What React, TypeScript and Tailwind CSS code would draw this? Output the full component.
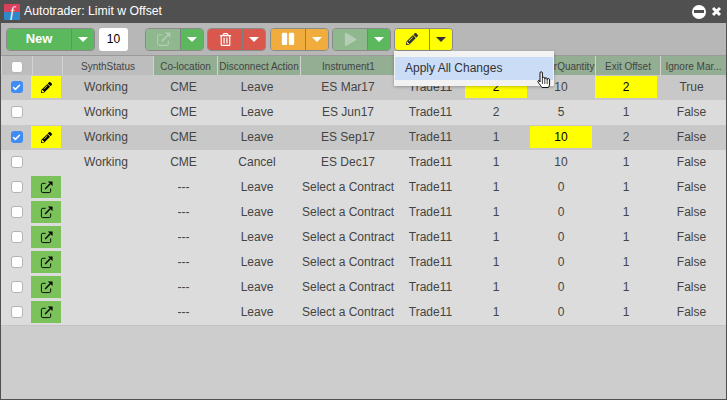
import { Check } from "lucide-react";
import { FaPause, FaPencilAlt, FaPlay, FaRegTrashAlt } from "react-icons/fa";

const widths = ["w-[31px]", "w-[30px]", "w-[91px]", "w-[64px]", "w-[83px]", "w-[96px]", "w-[69px]", "w-[65px]", "w-[65px]", "w-[65px]", "w-[66px]"];

const headers = [
  { label: "", green: false },
  { label: "", green: false },
  { label: "SynthStatus", green: false },
  { label: "Co-location", green: true },
  { label: "Disconnect Action", green: true },
  { label: "Instrument1", green: true },
  { label: "", green: true },
  { label: "", green: true },
  { label: "OrderQuantity", green: true },
  { label: "Exit Offset", green: true },
  { label: "Ignore Mar...", green: true },
];

type Row = {
  checked: boolean;
  icon: "edit" | "open" | null;
  status: string;
  colo: string;
  action: string;
  instrument: string;
  qty: number;
  order: number;
  offset: number;
  ignore: string;
  dark: boolean;
  yellow?: "qty" | "order";
  yellowOffset?: boolean;
};

const rows: Row[] = [
  { checked: true, icon: "edit", status: "Working", colo: "CME", action: "Leave", instrument: "ES Mar17", qty: 2, order: 10, offset: 2, ignore: "True", dark: true, yellow: "qty", yellowOffset: true },
  { checked: false, icon: null, status: "Working", colo: "CME", action: "Leave", instrument: "ES Jun17", qty: 2, order: 5, offset: 1, ignore: "False", dark: false },
  { checked: true, icon: "edit", status: "Working", colo: "CME", action: "Leave", instrument: "ES Sep17", qty: 1, order: 10, offset: 2, ignore: "False", dark: true, yellow: "order" },
  { checked: false, icon: null, status: "Working", colo: "CME", action: "Cancel", instrument: "ES Dec17", qty: 1, order: 10, offset: 1, ignore: "False", dark: false },
  ...Array.from({ length: 6 }, () => ({
    checked: false,
    icon: "open" as const,
    status: "",
    colo: "---",
    action: "Leave",
    instrument: "Select a Contract",
    qty: 1,
    order: 0,
    offset: 1,
    ignore: "False",
    dark: false,
  })),
];

function OpenIcon({ size = 14 }: { size?: number }) {
  return (
    <svg width={size} height={size} viewBox="0 0 14 14">
      <path d="M6 2.500H3A1.500 1.500 0 0 0 1.500 4v7A1.500 1.500 0 0 0 3 12.500h7a1.500 1.500 0 0 0 1.500-1.500V8" fill="none" stroke="currentColor" strokeWidth="1" />
      <path d="M5.500 8.500L11 3" fill="none" stroke="currentColor" strokeWidth="1.500" />
      <path d="M8.500 .5h5V5.500z" fill="currentColor" />
    </svg>
  );
}

function Caret({ color = "border-t-white" }: { color?: string }) {
  return <span className={`w-0 h-0 border-x-[5px] border-x-transparent border-t-[5px] ${color}`} />;
}

function SplitButton({
  main,
  mainClass,
  caretClass,
  widthClass,
  caretColor,
}: {
  main: React.ReactNode;
  mainClass: string;
  caretClass: string;
  widthClass: string;
  caretColor?: string;
}) {
  return (
    <div className="flex h-[23px] rounded-[4px] overflow-hidden border border-[#8a8a8a]">
      <div className={`${widthClass} flex items-center justify-center ${mainClass}`}>{main}</div>
      <div className={`w-[23px] flex items-center justify-center border-l border-[#808080] ${caretClass}`}>
        <Caret color={caretColor} />
      </div>
    </div>
  );
}

function Cell({ w, children, yellow, flush }: { w: string; children?: React.ReactNode; yellow?: boolean; flush?: boolean }) {
  return (
    <div className={`${w} h-full pb-[1px] flex items-center justify-center shrink-0 whitespace-nowrap ${flush ? "" : "pr-[3px]"}`}>
      {yellow ? (
        <div className="w-[62px] h-[22px] bg-[#ffff00] text-black flex items-center justify-center">{children}</div>
      ) : (
        children
      )}
    </div>
  );
}

function Box({ checked }: { checked: boolean }) {
  return checked ? (
    <span className="w-[12px] h-[12px] rounded-[3px] bg-[#3f8cf5] flex items-center justify-center">
      <Check size={9} strokeWidth={4} className="text-white" />
    </span>
  ) : (
    <span className="w-[12px] h-[12px] rounded-[3px] bg-white border border-[#b4b4b4]" />
  );
}

export default function App() {
  return (
    <div className="relative w-[727px] h-[400px] overflow-hidden flex flex-col bg-[#505050] font-['Liberation_Sans',Arial,sans-serif] text-[#444]">
      {/* title bar */}
      <div className="h-[23px] shrink-0 flex items-center px-[4px] text-white">
        <svg width="16" height="16" viewBox="0 0 16 16" className="shrink-0 rounded-[1px]">
          <rect width="16" height="8" fill="#d9425a" />
          <rect y="8" width="16" height="8" fill="#2e88c9" />
          <text x="8" y="13" textAnchor="middle" fill="#fff" fontSize="15" fontStyle="italic" fontFamily="Liberation Serif, serif">
            f
          </text>
        </svg>
        <span className="ml-[4px] text-[12.25px] leading-none">Autotrader: Limit w Offset</span>
        <div className="ml-auto flex items-center gap-[5px] pr-[1px]">
          <span className="w-[14px] h-[14px] rounded-full bg-white flex items-center justify-center">
            <span className="w-[10px] h-[3px] bg-[#505050]" />
          </span>
          <svg width="11" height="11" viewBox="0 0 11 11">
            <path d="M2 2l7 7M9 2l-7 7" stroke="#fff" strokeWidth="3" />
          </svg>
        </div>
      </div>

      <div className="flex-1 mx-px mb-px bg-[#cdcdcd] flex flex-col">
        {/* toolbar */}
        <div className="h-[33px] shrink-0 bg-[#b7b7b7] border-b border-[#9a9a9a] flex items-center pl-[5px]">
          <SplitButton
            widthClass="w-[64px]"
            mainClass="bg-[#5cb85c] text-white font-bold text-[13px]"
            caretClass="bg-[#5cb85c]"
            main="New"
          />
          <div className="ml-[4px] w-[29px] h-[23px] bg-white rounded-[3px] flex items-center justify-center text-[12px] text-black">10</div>
          <div className="ml-[17px]">
            <SplitButton
              widthClass="w-[34px]"
              mainClass="bg-[#8fb88f] text-[#b5cdb5]"
              caretClass="bg-[#5cb85c]"
              main={<OpenIcon size={15} />}
            />
          </div>
          <div className="ml-[3px]">
            <SplitButton
              widthClass="w-[34px]"
              mainClass="bg-[#d9574c] text-white"
              caretClass="bg-[#d9574c]"
              main={<FaRegTrashAlt size={13} />}
            />
          </div>
          <div className="ml-[4px]">
            <SplitButton
              widthClass="w-[34px]"
              mainClass="bg-[#f0ad3e] text-white"
              caretClass="bg-[#f0ad3e]"
              main={<FaPause size={14} />}
            />
          </div>
          <div className="ml-[3px]">
            <SplitButton
              widthClass="w-[34px]"
              mainClass="bg-[#8fb88f] text-[#b5cdb5]"
              caretClass="bg-[#5cb85c]"
              main={<FaPlay size={13} />}
            />
          </div>
          <div className="ml-[3px]">
            <SplitButton
              widthClass="w-[34px]"
              mainClass="bg-[#ffff00] text-[#333]"
              caretClass="bg-[#ffff00]"
              caretColor="border-t-[#333]"
              main={<FaPencilAlt size={12} />}
            />
          </div>
        </div>

        {/* header */}
        <div className="h-[19px] shrink-0 flex bg-[#bdbdbd] text-[10px] text-[#444]">
          {headers.map((h, i) => (
            <div
              key={i}
              className={`${widths[i]} shrink-0 pt-[2px] flex items-center justify-center whitespace-nowrap overflow-hidden border-l border-[#d2d2d2] ${h.green ? "bg-[#93ae93]" : ""}`}
            >
              {i === 0 ? <Box checked={false} /> : h.label}
            </div>
          ))}
        </div>

        {/* rows */}
        {rows.map((r, i) => (
          <div key={i} className={`h-[25px] shrink-0 flex text-[12px] ${r.dark ? "bg-[#c8c8c8]" : "bg-[#dcdcdc]"}`}>
            <Cell w={widths[0]} flush>
              <Box checked={r.checked} />
            </Cell>
            <div className={`${widths[1]} shrink-0 h-full pb-[1px] flex items-center`}>
              {r.icon === "edit" && (
                <div className="ml-[-1px] w-[30px] h-[22px] bg-[#ffff00] flex items-center justify-center text-black">
                  <FaPencilAlt size={11} />
                </div>
              )}
              {r.icon === "open" && (
                <div className="ml-[-1px] w-[30px] h-[22px] bg-[#7cc25b] flex items-center justify-center text-black">
                  <OpenIcon size={13} />
                </div>
              )}
            </div>
            <Cell w={widths[2]}>{r.status}</Cell>
            <Cell w={widths[3]}>{r.colo}</Cell>
            <Cell w={widths[4]}>{r.action}</Cell>
            <Cell w={widths[5]} flush>{r.instrument}</Cell>
            <Cell w={widths[6]} flush>Trade11</Cell>
            <Cell w={widths[7]} yellow={r.yellow === "qty"}>{r.qty}</Cell>
            <Cell w={widths[8]} yellow={r.yellow === "order"}>{r.order}</Cell>
            <Cell w={widths[9]} yellow={r.yellowOffset}>{r.offset}</Cell>
            <Cell w={widths[10]}>{r.ignore}</Cell>
          </div>
        ))}
        <div className="h-px bg-[#c4c4c4]" />
      </div>

      {/* dropdown menu */}
      <div className="absolute left-[394px] top-[51px] w-[160px] h-[35px] bg-[#f2f2f2] shadow-[0_1px_3px_rgba(0,0,0,0.25)] px-[1px] pt-[6px]">
        <div className="h-[23px] pb-[1px] bg-[#cbdcf7] flex items-center pl-[10px] text-[12px] text-[#333]">Apply All Changes</div>
      </div>

      {/* hand cursor */}
      <svg className="absolute left-[535px] top-[70px]" width="18" height="20" viewBox="0 0 18 20">
        <path
          d="M5 3a1.200 1.200 0 0 1 2.400 0v5.500a1.200 1.200 0 0 1 2.400 0v.5a1.200 1.200 0 0 1 2.400 0v.8a1.200 1.200 0 0 1 2.400 0v4.200c0 1.500-.6 2.500-1.200 3.500H7c-.8-1.500-2.500-3-4-5.500-.7-1.200.8-2.200 1.700-1.200L5 12z"
          fill="#fff"
          stroke="#111"
          strokeWidth="1"
        />
        <path d="M7.400 9v5M9.800 9v5M12.200 10v4" stroke="#111" strokeWidth="0.8" />
      </svg>
    </div>
  );
}
